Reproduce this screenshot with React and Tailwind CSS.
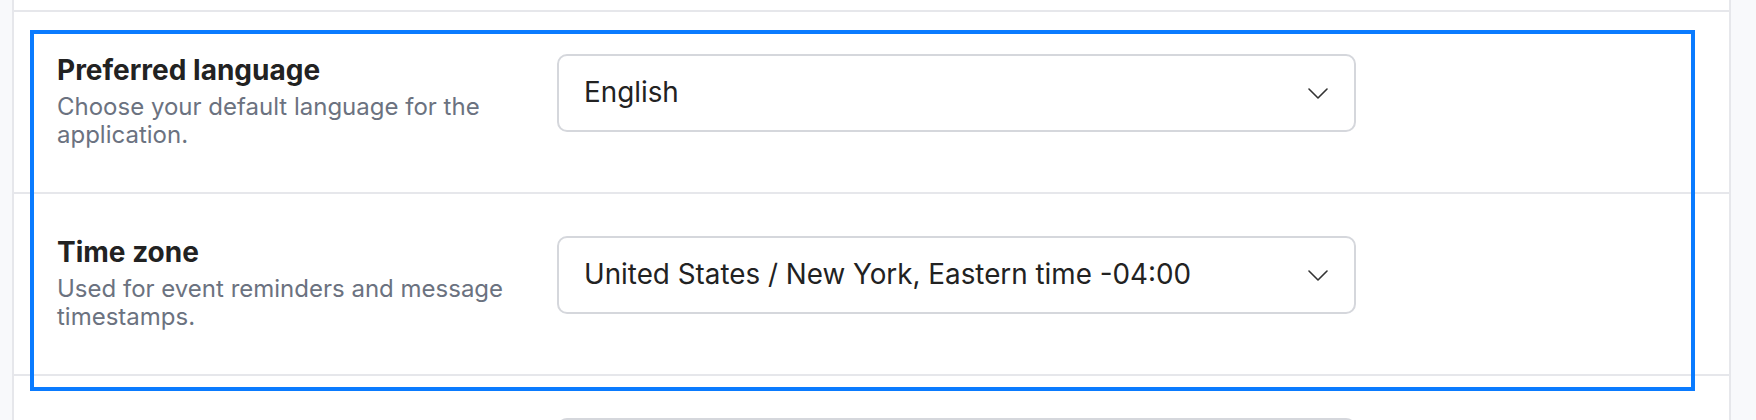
import { useState } from 'react';

const settings = [
  {
    id: 'language',
    title: 'Preferred language',
    description: 'Choose your default language for the application.',
    value: 'English',
  },
  {
    id: 'timezone',
    title: 'Time zone',
    description: 'Used for event reminders and message timestamps.',
    value: 'United States / New York, Eastern time -04:00',
  },
  {
    id: 'dateformat',
    title: 'Date format',
    description: 'How dates are shown across the application.',
    value: 'MM/DD/YYYY',
  },
];

const Chevron = () => (
  <svg width="20" height="11" viewBox="0 0 20 11" fill="none" className="shrink-0">
    <path d="M1 1l9 9 9-9" stroke="#333" strokeWidth="1.6" strokeLinecap="round" strokeLinejoin="round" />
  </svg>
);

const SelectBox = ({ value }) => (
  <button
    type="button"
    className="w-[799px] h-[78px] flex items-center justify-between rounded-[10px] border-2 border-[#d5d7dc] bg-white pl-[25px] pr-[26px] text-left"
  >
    <span className="text-[27.8px] text-[#222]">{value}</span>
    <Chevron />
  </button>
);

const SettingRow = ({ setting }) => (
  <div className="h-[182px] border-b-2 border-[#e6e7eb] flex items-start pl-[43px] pt-[42px]">
    <div className="w-[470px] mr-[30px] -mt-[1px]">
      <h4 className="text-[28px] leading-[34px] font-bold text-[#222]">{setting.title}</h4>
      <p className="mt-[6px] text-[24px] leading-[28px] text-[#6b7280]">{setting.description}</p>
    </div>
    <SelectBox value={setting.value} />
  </div>
);

export default function App() {
  const [rows] = useState(settings);

  return (
    <div
      className="relative w-[1756px] h-[420px] overflow-hidden bg-[#f8f9fb] pl-[12px]"
      style={{ fontFamily: 'Inter, "Noto Sans", sans-serif' }}
    >
      <div className="w-[1719px] bg-white border-x-2 border-[#e6e7eb]">
        <div className="h-[12px] border-b-2 border-[#e6e7eb]" />
        {rows.map((s) => (
          <SettingRow key={s.id} setting={s} />
        ))}
      </div>

      {/* focus highlight around the locale group */}
      <div className="absolute left-[30px] top-[30px] w-[1665px] h-[361px] border-4 border-[#0a7bff] pointer-events-none" />
    </div>
  );
}
